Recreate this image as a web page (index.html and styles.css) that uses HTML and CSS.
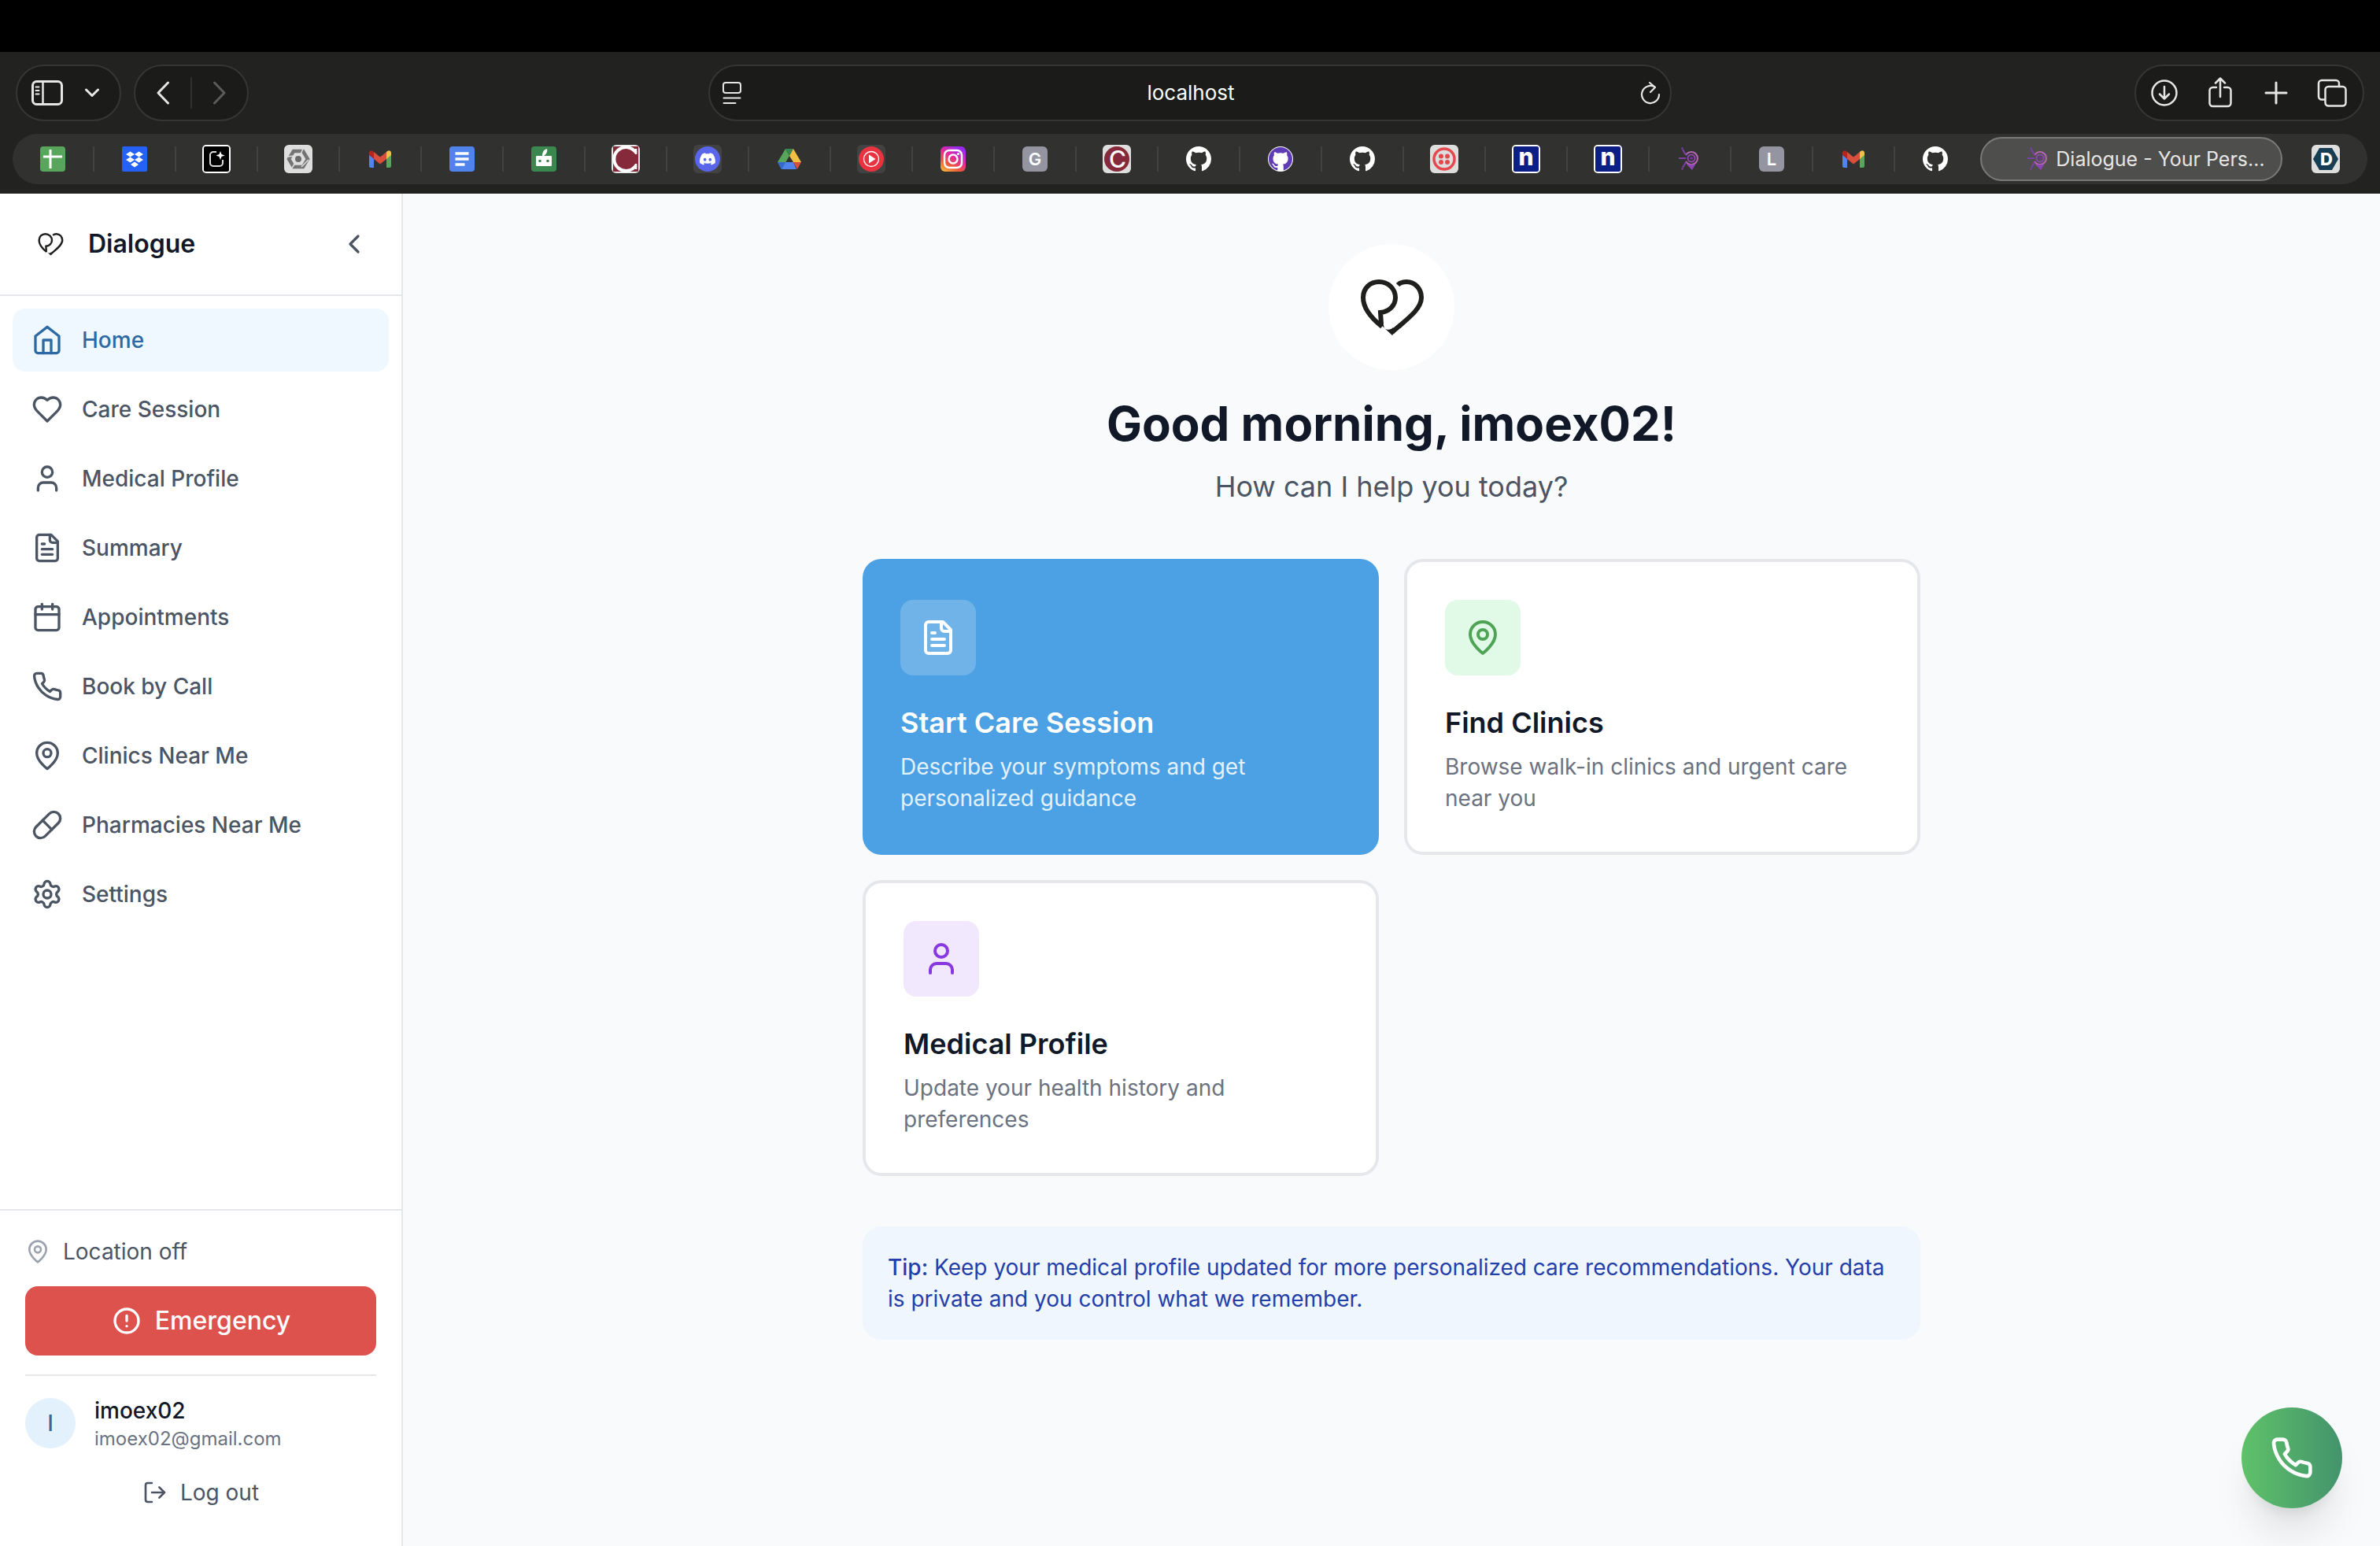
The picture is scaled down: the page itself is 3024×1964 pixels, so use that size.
FILE: index.html
```html
<!DOCTYPE html>
<html lang="en">
<head>
    <meta charset="UTF-8">
    <meta name="viewport" content="width=device-width, initial-scale=1.0">
    <title>Dialogue</title>
    <link rel="stylesheet" href="styles.css">
</head>
<body>

    <!-- Shared icons -->
    <svg class="sprite" aria-hidden="true">
        <symbol id="logo" viewBox="0 0 160 160">
            <path d="M68 105C58 97 44 83 44 68C44 56 53 48 64 48C76 48 85 57 85 68C85 78 77 86 66 87L67 102"/>
            <path d="M88 52C91 49 95 48 99 48C110 48 118 57 118 68C118 84 96 98 81 112"/>
            <path class="logo-tip" d="M64 98L68 96L71 107C75 110 79 109 82 106L86 110L81 116L67 103Z"/>
        </symbol>
        <symbol id="home" viewBox="0 0 24 24"><path d="M3 9l9-7 9 7v11a2 2 0 0 1-2 2H5a2 2 0 0 1-2-2z"/><path d="M9 22V12h6v10"/></symbol>
        <symbol id="heart" viewBox="0 0 24 24"><path d="M19 14c1.49-1.46 3-3.21 3-5.5A5.5 5.5 0 0 0 16.5 3c-1.76 0-3 .5-4.5 2-1.5-1.5-2.74-2-4.5-2A5.5 5.5 0 0 0 2 8.5c0 2.3 1.5 4.05 3 5.5l7 7Z"/></symbol>
        <symbol id="user" viewBox="0 0 24 24"><path d="M19 21v-2a4 4 0 0 0-4-4H9a4 4 0 0 0-4 4v2"/><circle cx="12" cy="7" r="4"/></symbol>
        <symbol id="file" viewBox="0 0 24 24"><path d="M15 2H6a2 2 0 0 0-2 2v16a2 2 0 0 0 2 2h12a2 2 0 0 0 2-2V7Z"/><path d="M14 2v4a2 2 0 0 0 2 2h4M10 9H8M16 13H8M16 17H8"/></symbol>
        <symbol id="calendar" viewBox="0 0 24 24"><rect x="3" y="4" width="18" height="18" rx="2"/><path d="M16 2v4M8 2v4M3 10h18"/></symbol>
        <symbol id="phone" viewBox="0 0 24 24"><path d="M22 16.92v3a2 2 0 0 1-2.18 2 19.79 19.79 0 0 1-8.63-3.07 19.5 19.5 0 0 1-6-6 19.79 19.79 0 0 1-3.07-8.67A2 2 0 0 1 4.11 2h3a2 2 0 0 1 2 1.72 12.84 12.84 0 0 0 .7 2.81 2 2 0 0 1-.45 2.11L8.09 9.91a16 16 0 0 0 6 6l1.27-1.27a2 2 0 0 1 2.11-.45 12.84 12.84 0 0 0 2.81.7A2 2 0 0 1 22 16.92z"/></symbol>
        <symbol id="pin" viewBox="0 0 24 24"><path d="M20 10c0 6-8 12-8 12s-8-6-8-12a8 8 0 0 1 16 0Z"/><circle cx="12" cy="10" r="3"/></symbol>
        <symbol id="pill" viewBox="0 0 24 24"><path d="m10.5 20.5 10-10a4.95 4.95 0 1 0-7-7l-10 10a4.95 4.95 0 1 0 7 7Z"/><path d="m8.5 8.5 7 7"/></symbol>
        <symbol id="gear" viewBox="0 0 24 24"><path d="M9.671 4.136a2.34 2.34 0 0 1 4.659 0 2.34 2.34 0 0 0 3.319 1.915 2.34 2.34 0 0 1 2.33 4.033 2.34 2.34 0 0 0 0 3.831 2.34 2.34 0 0 1-2.33 4.033 2.34 2.34 0 0 0-3.319 1.915 2.34 2.34 0 0 1-4.659 0 2.34 2.34 0 0 0-3.32-1.915 2.34 2.34 0 0 1-2.33-4.033 2.34 2.34 0 0 0 0-3.831A2.34 2.34 0 0 1 6.35 6.051a2.34 2.34 0 0 0 3.319-1.915"/><circle cx="12" cy="12" r="3"/></symbol>
        <symbol id="github" viewBox="0 0 16 16"><path d="M8 0C3.58 0 0 3.58 0 8c0 3.54 2.29 6.53 5.47 7.59.4.07.55-.17.55-.38 0-.19-.01-.82-.01-1.49-2.01.37-2.53-.49-2.69-.94-.09-.23-.48-.94-.82-1.13-.28-.15-.68-.52-.01-.53.63-.01 1.08.58 1.23.82.72 1.21 1.87.87 2.33.66.07-.52.28-.87.51-1.07-1.78-.2-3.64-.89-3.64-3.95 0-.87.31-1.59.82-2.15-.08-.2-.36-1.02.08-2.12 0 0 .67-.21 2.2.82.64-.18 1.32-.27 2-.27.68 0 1.36.09 2 .27 1.53-1.04 2.2-.82 2.2-.82.44 1.1.16 1.92.08 2.12.51.56.82 1.27.82 2.15 0 3.07-1.87 3.75-3.65 3.95.29.25.54.73.54 1.48 0 1.07-.01 1.93-.01 2.2 0 .21.15.46.55.38A8.013 8.013 0 0016 8c0-4.42-3.58-8-8-8z"/></symbol>
        <symbol id="gmail" viewBox="0 0 36 36">
            <path fill="#4f86ec" d="M4 11l6 5v13H6a2 2 0 0 1-2-2z"/>
            <path fill="#58a55c" d="M32 11l-6 5v13h4a2 2 0 0 0 2-2z"/>
            <path fill="#f1bf42" d="M26 9l1.500-1.200C29.400 6.400 32 7.700 32 10v3l-6 5z"/>
            <path fill="#b3261e" d="M10 9L8.500 7.800C6.600 6.400 4 7.700 4 10v3l6 5z"/>
            <path fill="#d94f3d" d="M10 9l8 6.500L26 9v9l-8 6.500L10 18z"/>
        </symbol>
        <symbol id="bug" viewBox="0 0 36 36">
            <g fill="none" stroke-width="2">
                <path d="M13 13a8 8 0 1 1 0 8" stroke="#b565b0"/>
                <circle cx="20" cy="17" r="4.500" stroke="#8a4aa8"/>
                <path d="M4 17h9M9 6l4 7M9 29l4-7" stroke="#7d3fa8"/>
            </g>
            <circle cx="20" cy="17" r="2" fill="#6d3590"/>
            <path fill="#8d45b5" d="M14 25h11l-4 7z"/>
            <circle cx="8.500" cy="4.500" r="1.200" fill="#7d3fa8"/><circle cx="8.500" cy="30.500" r="1.200" fill="#7d3fa8"/>
        </symbol>
        <symbol id="npad" viewBox="0 0 36 36">
            <rect width="36" height="36" rx="5" fill="#fff"/>
            <rect x="2" y="2" width="32" height="32" rx="2" fill="#0b1f85"/>
            <text x="18" y="26" class="fav-letter n-letter">n</text>
        </symbol>
    </svg>

    <!-- Browser bar -->
    <header class="browser">
        <div class="menubar"></div>
        <div class="toolbar">
            <div class="toolbar-left">
                <div class="capsule sidebar-capsule">
                    <button class="tool" aria-label="Sidebar">
                        <svg class="line" width="40" height="32" viewBox="0 0 40 32"><rect x="1.500" y="1.500" width="37" height="29" rx="5" stroke-width="3"/><path d="M14.500 2v28" stroke-width="2.500"/><path d="M5.500 8.500h4M5.500 13h4M5.500 17.500h4" stroke-width="2"/></svg>
                    </button>
                    <button class="tool" aria-label="Tab groups">
                        <svg class="line" width="18" height="12" viewBox="0 0 18 12"><path d="M1.500 2L9 9.500 16.500 2" stroke-width="3"/></svg>
                    </button>
                </div>
                <div class="capsule history-capsule">
                    <button class="tool" aria-label="Back">
                        <svg class="line" width="18" height="30" viewBox="0 0 18 30"><path d="M15.500 2L3 15l12.500 13" stroke-width="3"/></svg>
                    </button>
                    <span class="capsule-divider"></span>
                    <button class="tool disabled" aria-label="Forward">
                        <svg class="line" width="18" height="30" viewBox="0 0 18 30"><path d="M2.500 2L15 15 2.500 28" stroke-width="3"/></svg>
                    </button>
                </div>
            </div>
            <div class="capsule address">
                <svg class="line" width="24" height="30" viewBox="0 0 24 30"><rect x="1" y="2" width="22" height="13" rx="3" stroke-width="2"/><path d="M1.500 21.500h21M1.500 28h15" stroke-width="2"/></svg>
                <input type="text" class="address-input" value="localhost" aria-label="Address">
                <button class="tool" aria-label="Reload">
                    <svg class="line" width="26" height="30" viewBox="0 0 26 30"><path d="M24 17a11 11 0 1 1-5.500-9.500" stroke-width="2.200"/><path d="M12 2l7 6-6 6" stroke-width="2.200"/></svg>
                </button>
            </div>
            <div class="capsule action-capsule">
                <button class="tool" aria-label="Downloads">
                    <svg class="line" width="36" height="36" viewBox="0 0 36 36"><circle cx="18" cy="18" r="15.500" stroke-width="2.500"/><path d="M18 10v15M12 19.500l6 6 6-6" stroke-width="2.500"/></svg>
                </button>
                <button class="tool" aria-label="Share">
                    <svg class="line" width="32" height="40" viewBox="0 0 32 40"><path d="M11 13H6.500a4 4 0 0 0-4 4v16a4 4 0 0 0 4 4h19a4 4 0 0 0 4-4V17a4 4 0 0 0-4-4H21M16 25V2M10 7.500L16 1.500l6 6" stroke-width="2.500"/></svg>
                </button>
                <button class="tool" aria-label="New tab">
                    <svg class="line" width="30" height="30" viewBox="0 0 30 30"><path d="M15 2v26M2 15h26" stroke-width="3"/></svg>
                </button>
                <button class="tool" aria-label="Tab overview">
                    <svg class="line" width="38" height="36" viewBox="0 0 38 36"><rect x="10.500" y="10" width="26" height="24.500" rx="4" stroke-width="2.500"/><path d="M10 26.500H6A4 4 0 0 1 2 22.500V6a4 4 0 0 1 4-4h18a4 4 0 0 1 4 4v4" stroke-width="2.500"/></svg>
                </button>
            </div>
        </div>

        <div class="tabs">
            <button class="tab" aria-label="Spreadsheet"><svg class="fav" viewBox="0 0 36 36"><rect x="2" y="2" width="32" height="32" rx="4" fill="#58a55c"/><path d="M15 6v24M6 15h24" stroke="#fff" stroke-width="3"/></svg></button>
            <button class="tab" aria-label="Dropbox"><svg class="fav" viewBox="0 0 36 36"><rect x="2" y="2" width="32" height="32" rx="2" fill="#2661f5"/><path fill="#fff" d="M12.500 8.500l5.500 3.500-5.500 3.500L7 12zM23.500 8.500L29 12l-5.500 3.500L18 12zM12.500 15.500L18 19l-5.500 3.500L7 19zM23.500 15.500L29 19l-5.500 3.500L18 19zM18 21.500l5 3.500-5 3.500-5-3.500z"/></svg></button>
            <button class="tab" aria-label="Editor"><svg class="fav" viewBox="0 0 36 36"><rect width="36" height="36" rx="5" fill="#fff"/><rect x="2" y="2" width="32" height="32" rx="2" fill="#000"/><path d="M18 9h-4a4 4 0 0 0-4 4v10a4 4 0 0 0 4 4h8a4 4 0 0 0 4-4v-4" fill="none" stroke="#ddd" stroke-width="2"/><path fill="#fff" d="M23 8l1.500 4 4 1.500-4 1.500-1.500 4-1.500-4-4-1.500 4-1.500z"/></svg></button>
            <button class="tab" aria-label="Hex"><svg class="fav" viewBox="0 0 36 36"><rect width="36" height="36" rx="6" fill="#dedede"/><path d="M12 8h12l6 10-6 10H12L6 18z" fill="none" stroke="#747474" stroke-width="4.500"/><path d="M24 5l-3 7M31 19l-9 9M9 31l5-8M4 15l9-1" stroke="#dedede" stroke-width="1.500"/><circle cx="18" cy="18" r="4" fill="#6a6a6a"/></svg></button>
            <button class="tab" aria-label="Gmail"><svg class="fav"><use href="#gmail"/></svg></button>
            <button class="tab" aria-label="Docs"><svg class="fav" viewBox="0 0 36 36"><rect x="2" y="2" width="32" height="32" rx="4" fill="#5083ec"/><path d="M9.500 11h17M9.500 18h17M9.500 25h12" stroke="#fff" stroke-width="3.500"/></svg></button>
            <button class="tab" aria-label="Bot"><svg class="fav" viewBox="0 0 36 36"><rect x="2" y="2" width="32" height="32" rx="4" fill="#3a8750"/><rect x="8" y="14" width="20" height="13" rx="1" fill="#fff"/><circle cx="13" cy="20.500" r="1.800" fill="#3a8750"/><circle cx="23" cy="20.500" r="1.800" fill="#3a8750"/><path fill="#fff" d="M16 14c0-5 2-8 6-9 1 4-1 7-4 9z"/></svg></button>
            <button class="tab" aria-label="Campus"><svg class="fav" viewBox="0 0 36 36"><rect width="36" height="36" rx="6" fill="#e6e6e6"/><rect x="2" y="2" width="32" height="32" fill="#862a3b"/><path d="M31 10A15 15 0 1 0 31 26" fill="none" stroke="#fff" stroke-width="4"/><path d="M31 5v7M31 24v7" stroke="#fff" stroke-width="2.500"/></svg></button>
            <button class="tab" aria-label="Discord"><svg class="fav" viewBox="0 0 36 36"><rect width="36" height="36" rx="6" fill="#424242"/><circle cx="18" cy="18" r="16" fill="#5a66ea"/><path fill="#fff" transform="translate(8 8) scale(.83)" d="M20.317 4.3698a19.7913 19.7913 0 00-4.8851-1.5152.0741.0741 0 00-.0785.0371c-.211.3753-.4447.8648-.6083 1.2495-1.8447-.2762-3.68-.2762-5.4868 0-.1636-.3933-.4058-.8742-.6177-1.2495a.077.077 0 00-.0785-.037 19.7363 19.7363 0 00-4.8852 1.515.0699.0699 0 00-.0321.0277C.5334 9.0458-.319 13.5799.0992 18.0578a.0824.0824 0 00.0312.0561c2.0528 1.5076 4.0413 2.4228 5.9929 3.0294a.0777.0777 0 00.0842-.0276c.4616-.6304.8731-1.2952 1.226-1.9942a.076.076 0 00-.0416-.1057c-.6528-.2476-1.2743-.5495-1.8722-.8923a.077.077 0 01-.0076-.1277c.1258-.0943.2517-.1923.3718-.2914a.0743.0743 0 01.0776-.0105c3.9278 1.7933 8.18 1.7933 12.0614 0a.0739.0739 0 01.0785.0095c.1202.099.246.1981.3728.2924a.077.077 0 01-.0066.1276 12.2986 12.2986 0 01-1.873.8914.0766.0766 0 00-.0407.1067c.3604.698.7719 1.3628 1.225 1.9932a.076.076 0 00.0842.0286c1.961-.6067 3.9495-1.5219 6.0023-3.0294a.077.077 0 00.0313-.0552c.5004-5.177-.8382-9.6739-3.5485-13.6604a.061.061 0 00-.0312-.0286zM8.02 15.3312c-1.1825 0-2.1569-1.0857-2.1569-2.419 0-1.3332.9555-2.4189 2.157-2.4189 1.2108 0 2.1757 1.0952 2.1568 2.419 0 1.3332-.9555 2.4189-2.1569 2.4189zm7.9748 0c-1.1825 0-2.1569-1.0857-2.1569-2.419 0-1.3332.9554-2.4189 2.1569-2.4189 1.2108 0 2.1757 1.0952 2.1568 2.419 0 1.3332-.946 2.4189-2.1568 2.4189Z"/></svg></button>
            <button class="tab" aria-label="Drive"><svg class="fav" viewBox="0 0 36 36"><path fill="#58a55c" d="M13 5l5 9-10 17-5-9z"/><path fill="#3a8750" d="M13 5h10l-5 9z"/><path fill="#f1bf42" d="M23 5l10 17H23l-5-8z"/><path fill="#5083ec" d="M13 22h10l4 9H8z"/><path fill="#3369d0" d="M3 22h10l-5 9z"/><path fill="#d94f3d" d="M23 22h10l-5 9z"/></svg></button>
            <button class="tab" aria-label="YouTube Music"><svg class="fav" viewBox="0 0 36 36"><rect width="36" height="36" rx="6" fill="#424242"/><circle cx="18" cy="18" r="16" fill="#ea3340"/><circle cx="18" cy="18" r="9.500" fill="none" stroke="#fff" stroke-width="1.300"/><path fill="#fff" d="M15 12.500l8.500 5.500-8.500 5.500z"/></svg></button>
            <button class="tab" aria-label="Instagram"><svg class="fav" viewBox="0 0 36 36"><defs><linearGradient id="insta" x1="0" y1="1" x2=".6" y2="0"><stop offset="0" stop-color="#f8c83c"/><stop offset=".35" stop-color="#ee5a3a"/><stop offset=".65" stop-color="#e52a9c"/><stop offset="1" stop-color="#9a2af0"/></linearGradient></defs><rect x="2" y="2" width="32" height="32" rx="6" fill="url(#insta)"/><rect x="7" y="7" width="22" height="22" rx="6" fill="none" stroke="#fff" stroke-width="2.500"/><circle cx="18" cy="18" r="5.500" fill="none" stroke="#fff" stroke-width="2.500"/><circle cx="24.500" cy="11.500" r="1.600" fill="#fff"/></svg></button>
            <button class="tab" aria-label="G"><svg class="fav" viewBox="0 0 36 36"><rect x="2" y="2" width="32" height="32" rx="6" fill="#9495a0"/><text x="18" y="26" class="fav-letter">G</text></svg></button>
            <button class="tab" aria-label="C"><svg class="fav" viewBox="0 0 36 36"><rect width="36" height="36" rx="6" fill="#dedede"/><circle cx="18" cy="18" r="16" fill="#862a3b"/><text x="19" y="29" class="fav-letter c-letter">C</text></svg></button>
            <button class="tab" aria-label="GitHub"><svg class="fav fav-mark"><use href="#github"/></svg></button>
            <button class="tab" aria-label="GitHub profile"><svg class="fav" viewBox="0 0 36 36"><circle cx="18" cy="18" r="16" fill="#fff"/><use href="#github" x="3" y="3" width="30" height="30" fill="#5f3bb8"/></svg></button>
            <button class="tab" aria-label="GitHub"><svg class="fav fav-mark"><use href="#github"/></svg></button>
            <button class="tab" aria-label="Twilio"><svg class="fav" viewBox="0 0 36 36"><rect width="36" height="36" rx="6" fill="#dedede"/><circle cx="18" cy="18" r="13" fill="none" stroke="#e5484d" stroke-width="3.500"/><g fill="#e5484d"><circle cx="14" cy="14.500" r="3"/><circle cx="22" cy="14.500" r="3"/><circle cx="14" cy="22" r="3"/><circle cx="22" cy="22" r="3"/></g></svg></button>
            <button class="tab" aria-label="n"><svg class="fav"><use href="#npad"/></svg></button>
            <button class="tab" aria-label="n"><svg class="fav"><use href="#npad"/></svg></button>
            <button class="tab" aria-label="Agent"><svg class="fav"><use href="#bug"/></svg></button>
            <button class="tab" aria-label="L"><svg class="fav" viewBox="0 0 36 36"><rect x="2" y="2" width="32" height="32" rx="6" fill="#9495a0"/><text x="18" y="26" class="fav-letter">L</text></svg></button>
            <button class="tab" aria-label="Gmail"><svg class="fav"><use href="#gmail"/></svg></button>
            <button class="tab" aria-label="GitHub"><svg class="fav fav-mark"><use href="#github"/></svg></button>
            <button class="tab active"><svg class="fav"><use href="#bug"/></svg><span>Dialogue - Your Pers…</span></button>
            <button class="tab" aria-label="D"><svg class="fav" viewBox="0 0 36 36"><rect width="36" height="36" rx="6" fill="#dedede"/><path fill="#173d54" d="M10 4h16l8 14-8 14H10L2 18z"/><text x="19" y="26" class="fav-letter d-letter">D</text></svg></button>
        </div>
    </header>

    <div class="app">
        <!-- Sidebar -->
        <aside class="sidebar">
            <div class="sidebar-header">
                <svg class="logo logo-small"><use href="#logo"/></svg>
                <span class="brand">Dialogue</span>
                <button class="collapse" aria-label="Collapse sidebar">
                    <svg class="icon" viewBox="0 0 24 24"><path d="M15 18l-6-6 6-6"/></svg>
                </button>
            </div>

            <nav class="nav">
                <a href="#home" class="nav-link current"><svg class="icon"><use href="#home"/></svg>Home</a>
                <a href="#care" class="nav-link"><svg class="icon"><use href="#heart"/></svg>Care Session</a>
                <a href="#profile" class="nav-link"><svg class="icon"><use href="#user"/></svg>Medical Profile</a>
                <a href="#summary" class="nav-link"><svg class="icon"><use href="#file"/></svg>Summary</a>
                <a href="#appointments" class="nav-link"><svg class="icon"><use href="#calendar"/></svg>Appointments</a>
                <a href="#call" class="nav-link"><svg class="icon"><use href="#phone"/></svg>Book by Call</a>
                <a href="#clinics" class="nav-link"><svg class="icon"><use href="#pin"/></svg>Clinics Near Me</a>
                <a href="#pharmacies" class="nav-link"><svg class="icon"><use href="#pill"/></svg>Pharmacies Near Me</a>
                <a href="#settings" class="nav-link"><svg class="icon"><use href="#gear"/></svg>Settings</a>
            </nav>

            <div class="sidebar-footer">
                <div class="location"><svg class="icon icon-small"><use href="#pin"/></svg>Location off</div>
                <button class="emergency">
                    <svg class="icon" viewBox="0 0 24 24"><path d="M12 8v4m0 4h.01M21 12a9 9 0 1 1-18 0 9 9 0 0 1 18 0z"/></svg>Emergency
                </button>
                <div class="account">
                    <div class="profile">
                        <span class="avatar">I</span>
                        <div>
                            <p class="user-name">imoex02</p>
                            <p class="user-email">imoex02@gmail.com</p>
                        </div>
                    </div>
                    <button class="logout">
                        <svg class="icon icon-small" viewBox="0 0 24 24"><path d="M9 21H5a2 2 0 0 1-2-2V5a2 2 0 0 1 2-2h4M16 17l5-5-5-5M21 12H9"/></svg>Log out
                    </button>
                </div>
            </div>
        </aside>

        <!-- Home -->
        <main class="main">
            <div class="content">
                <div class="welcome">
                    <div class="logo-circle"><svg class="logo"><use href="#logo"/></svg></div>
                    <h1>Good morning, imoex02!</h1>
                    <p>How can I help you today?</p>
                </div>

                <div class="cards">
                    <button class="card primary">
                        <span class="card-icon"><svg class="icon icon-large"><use href="#file"/></svg></span>
                        <span class="card-title">Start Care Session</span>
                        <span class="card-text">Describe your symptoms and get personalized guidance</span>
                    </button>
                    <button class="card">
                        <span class="card-icon green"><svg class="icon icon-large"><use href="#pin"/></svg></span>
                        <span class="card-title">Find Clinics</span>
                        <span class="card-text">Browse walk-in clinics and urgent care near you</span>
                    </button>
                    <button class="card">
                        <span class="card-icon purple"><svg class="icon icon-large"><use href="#user"/></svg></span>
                        <span class="card-title">Medical Profile</span>
                        <span class="card-text">Update your health history and preferences</span>
                    </button>
                </div>

                <p class="tip"><strong>Tip:</strong> Keep your medical profile updated for more personalized care recommendations. Your data is private and you control what we remember.</p>
            </div>
        </main>
    </div>

    <button class="call-button" aria-label="Call"><svg class="icon icon-call"><use href="#phone"/></svg></button>

</body>
</html>
```
FILE: styles.css
```css
/* Global */
* {
    margin: 0;
    padding: 0;
    box-sizing: border-box;
}

body {
    display: flex;
    flex-direction: column;
    min-height: 100vh;
    background-color: #f9fafc;
    color: #111827;
    font-family: Inter, sans-serif;
    font-size: 28px;
    line-height: 40px;
}

button, input {
    font: inherit;
    color: inherit;
    background: none;
    border: none;
}

button {
    cursor: pointer;
}

a {
    color: inherit;
    text-decoration: none;
}

.sprite {
    display: none;
}

/* Icons */
.icon {
    flex: none;
    width: 40px;
    height: 40px;
    fill: none;
    stroke: currentColor;
    stroke-width: 2;
    stroke-linecap: round;
    stroke-linejoin: round;
}

.icon-small {
    width: 32px;
    height: 32px;
}

.icon-large {
    width: 48px;
    height: 48px;
}

.icon-call {
    width: 56px;
    height: 56px;
}

.line {
    flex: none;
    fill: none;
    stroke: currentColor;
    stroke-linecap: round;
    stroke-linejoin: round;
}

.logo {
    display: block;
    width: 160px;
    height: 160px;
    fill: none;
    stroke: #1f1f1e;
    stroke-width: 6;
}

.logo-small {
    width: 64px;
    height: 64px;
}

.logo-tip {
    fill: #1f1f1e;
    stroke: none;
}

/* Browser bar */
.browser {
    background-color: #222220;
    color: #e6e6e4;
    padding-bottom: 12px;
}

.menubar {
    height: 66px;
    background-color: #000;
}

.toolbar {
    display: grid;
    grid-template-columns: 1fr minmax(0, 1224px) 1fr;
    align-items: center;
    padding: 16px 20px;
}

.toolbar-left {
    display: flex;
    gap: 16px;
}

.capsule {
    display: flex;
    align-items: center;
    height: 72px;
    background-color: #1b1b19;
    border: 2px solid #363634;
    border-radius: 36px;
}

.tool {
    display: flex;
    align-items: center;
    justify-content: center;
}

.tool.disabled {
    color: #5c5c5a;
}

.sidebar-capsule {
    gap: 28px;
    padding: 0 26px 0 18px;
}

.history-capsule .tool {
    width: 70px;
    height: 68px;
}

.capsule-divider {
    width: 2px;
    height: 40px;
    background-color: #30302e;
}

.address {
    padding: 0 12px 0 16px;
}

.address-input {
    flex: 1;
    min-width: 0;
    color: #fff;
    font-size: 26px;
    text-align: center;
    outline: none;
}

.action-capsule {
    justify-self: end;
    width: 292px;
    padding-right: 4px;
}

.action-capsule .tool {
    flex: 1;
}

/* Tabs */
.tabs {
    display: flex;
    align-items: center;
    height: 64px;
    margin: 0 16px;
    background-color: #313130;
    border-radius: 32px;
}

.tab {
    display: flex;
    flex: 1;
    align-items: center;
    justify-content: center;
    height: 32px;
    border-right: 2px solid #424241;
}

.tab:nth-last-child(-n+3) {
    border-right-color: transparent;
}

.tab.active {
    flex: 0 0 384px;
    gap: 4px;
    height: 56px;
    margin: 0 4px;
    padding-left: 34px;
    background-color: #4e4e4d;
    border: 2px solid #7a7a79;
    border-radius: 28px;
    font-size: 25px;
}

.fav {
    flex: none;
    width: 36px;
    height: 36px;
}

.fav-mark {
    width: 32px;
    height: 32px;
    fill: #fff;
}

.fav-letter {
    fill: #fff;
    font-size: 22px;
    font-weight: 600;
    text-anchor: middle;
}

.c-letter {
    font-size: 30px;
    font-weight: 500;
}

.n-letter {
    font-size: 30px;
    font-weight: 800;
}

.d-letter {
    font-weight: 800;
}

/* App layout */
.app {
    display: flex;
    flex: 1;
}

.sidebar {
    display: flex;
    flex: none;
    flex-direction: column;
    width: 512px;
    background-color: #fff;
    border-right: 2px solid #e5e7eb;
    color: #4b5563;
}

.sidebar-header {
    display: flex;
    align-items: center;
    gap: 16px;
    padding: 32px;
    border-bottom: 2px solid #e5e7eb;
}

.brand {
    flex: 1;
    color: #111827;
    font-size: 32px;
    font-weight: 600;
}

.collapse {
    display: flex;
    padding: 8px;
}

.nav {
    display: flex;
    flex: 1;
    flex-direction: column;
    gap: 8px;
    padding: 16px;
}

.nav-link {
    display: flex;
    align-items: center;
    gap: 24px;
    padding: 20px 24px;
    border-radius: 16px;
    font-weight: 500;
}

.nav-link.current {
    background-color: #f0f8ff;
    color: #2d6aa3;
}

.sidebar-footer {
    padding: 32px;
    border-top: 2px solid #e5e7eb;
}

.location {
    display: flex;
    align-items: center;
    gap: 16px;
    margin-bottom: 24px;
}

.location .icon {
    color: #9ca3af;
}

.emergency {
    display: flex;
    align-items: center;
    justify-content: center;
    gap: 16px;
    width: 100%;
    padding: 24px;
    background-color: #dd524d;
    border-radius: 16px;
    color: #fff;
    font-size: 32px;
    font-weight: 500;
}

.account {
    margin-top: 24px;
    padding-top: 24px;
    border-top: 2px solid #e5e7eb;
}

.profile {
    display: flex;
    align-items: center;
    gap: 24px;
    margin-bottom: 16px;
}

.avatar {
    display: flex;
    align-items: center;
    justify-content: center;
    width: 64px;
    height: 64px;
    background-color: #e3f1fc;
    border-radius: 50%;
    color: #2d6aa3;
    font-weight: 500;
}

.user-name {
    color: #111827;
    font-weight: 500;
}

.user-email {
    color: #6b7280;
    font-size: 24px;
    line-height: 32px;
}

.logout {
    display: flex;
    align-items: center;
    justify-content: center;
    gap: 16px;
    width: 100%;
    padding: 16px;
}

/* Home */
.main {
    flex: 1;
    padding: 64px 48px;
}

.content {
    max-width: 1344px;
    margin: 0 auto;
}

.welcome {
    display: flex;
    flex-direction: column;
    align-items: center;
    margin-bottom: 64px;
    text-align: center;
}

.logo-circle {
    margin-bottom: 32px;
    background-color: #fff;
    border-radius: 50%;
}

.welcome h1 {
    margin-bottom: 16px;
    font-size: 60px;
    font-weight: 700;
    line-height: 72px;
}

.welcome p {
    color: #4b5563;
    font-size: 36px;
    line-height: 56px;
}

.cards {
    display: grid;
    grid-template-columns: repeat(2, minmax(0, 1fr));
    gap: 32px;
}

.card {
    display: flex;
    flex-direction: column;
    align-items: flex-start;
    justify-content: center;
    padding: 48px;
    background-color: #fff;
    border: 4px solid #e5e7eb;
    border-radius: 24px;
    text-align: left;
}

.card.primary {
    background-color: #4ba1e3;
    border: none;
    color: #fff;
}

.card-icon {
    display: flex;
    align-items: center;
    justify-content: center;
    width: 96px;
    height: 96px;
    margin-bottom: 32px;
    background-color: rgba(255, 255, 255, 0.2);
    border-radius: 16px;
}

.card-icon.green {
    background-color: #e1fae8;
    color: #4fa355;
}

.card-icon.purple {
    background-color: #f2e8fe;
    color: #8738e0;
}

.card-title {
    margin-bottom: 8px;
    font-size: 36px;
    font-weight: 600;
    line-height: 56px;
}

.card-text {
    color: #6b7280;
}

.primary .card-text {
    color: #e3f1fc;
}

.tip {
    margin-top: 64px;
    padding: 32px;
    background-color: #eff6fe;
    border-radius: 24px;
    color: #253fa9;
}

.tip strong {
    font-weight: 500;
}

/* Floating call button */
.call-button {
    position: fixed;
    right: 48px;
    bottom: 48px;
    display: flex;
    align-items: center;
    justify-content: center;
    width: 128px;
    height: 128px;
    background: linear-gradient(to right, #5fc269, #43936c);
    border-radius: 50%;
    box-shadow: 0 40px 50px -10px rgba(0, 0, 0, 0.1), 0 16px 20px -12px rgba(0, 0, 0, 0.1);
    color: #fff;
}
```
